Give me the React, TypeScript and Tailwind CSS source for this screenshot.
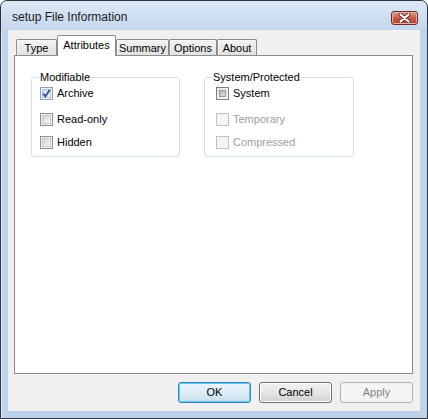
import React from 'react';

const tabs = [
  { label: 'Type', w: 'w-[41px]' },
  { label: 'Attributes', w: 'w-[59px]', active: true },
  { label: 'Summary', w: 'w-[53px]' },
  { label: 'Options', w: 'w-[48px]' },
  { label: 'About', w: 'w-[40px]' },
];

type BoxState = 'checked' | 'unchecked' | 'mixed' | 'disabled';

function CheckBox({ state }: { state: BoxState }) {
  if (state === 'disabled') {
    return <div className="w-[13px] h-[13px] shrink-0 border border-[#c2c2c2] bg-[#f4f4f4]" />;
  }
  if (state === 'mixed') {
    return (
      <div className="w-[13px] h-[13px] shrink-0 border border-[#7f7f7f] bg-gradient-to-br from-[#e4e4e4] to-[#f7f7f7] p-[2px]">
        <div className="w-full h-full border border-[#9c9c9c] bg-gradient-to-br from-[#b0b0b0] to-[#e2e2e2]" />
      </div>
    );
  }
  return (
    <div
      className={`relative w-[13px] h-[13px] shrink-0 border p-px ${
        state === 'checked' ? 'border-[#8e9fbd] bg-[#eef3fb]' : 'border-[#8e8f8f] bg-[#f4f4f4]'
      }`}
    >
      <div
        className={`w-full h-full border bg-gradient-to-br ${
          state === 'checked'
            ? 'border-[#b9c8e0] from-[#cfdcef] to-[#f4f8fd]'
            : 'border-[#c8c8c8] from-[#d4d4d4] to-[#f9f9f9]'
        }`}
      />
      {state === 'checked' && (
        <svg className="absolute left-0 top-0" width="11" height="11" viewBox="0 0 11 11">
          <path d="M2.2 5.6 L4.4 8.3 L8.9 1.8" fill="none" stroke="#3c5590" strokeWidth="1.9" />
        </svg>
      )}
    </div>
  );
}

function Row({ state, label, first, gap }: { state: BoxState; label: string; first?: boolean; gap?: string }) {
  return (
    <div className={`flex items-center h-[13px] ${first ? '' : gap}`}>
      <CheckBox state={state} />
      <span className={`ml-[4px] leading-[13px] ${state === 'disabled' ? 'text-[#9e9e9e]' : 'text-black'}`}>
        {label}
      </span>
    </div>
  );
}

function GroupBox({ title, width, padLeft, children }: { title: string; width: string; padLeft: string; children: React.ReactNode }) {
  return (
    <div className={`relative ${width} h-[80px] border border-[#d5dfe5] rounded-[3px] pt-[9px] ${padLeft}`}>
      <span className="absolute left-[7px] top-[-8px] px-px bg-white leading-[14px] text-black">{title}</span>
      {children}
    </div>
  );
}

function Button({ label, kind }: { label: string; kind?: 'default' | 'disabled' }) {
  if (kind === 'disabled') {
    return (
      <div className="w-[73px] h-[21px] rounded-[3px] border border-[#adb2b5] bg-[#f4f4f4] flex items-center justify-center text-[#838383]">
        {label}
      </div>
    );
  }
  if (kind === 'default') {
    return (
      <div className="w-[73px] h-[21px] rounded-[3px] border border-[#3c7fb1] shadow-[inset_0_0_0_1px_#5fcbf4] bg-gradient-to-b from-[#eaf5fb] via-[#dcecf6] to-[#c9e1f0] flex items-center justify-center text-black">
        {label}
      </div>
    );
  }
  return (
    <div className="w-[73px] h-[21px] rounded-[3px] border border-[#707070] shadow-[inset_0_0_0_1px_#fcfcfc] bg-gradient-to-b from-[#f2f2f2] via-[#e6e6e6] to-[#d0d0d0] flex items-center justify-center text-black">
      {label}
    </div>
  );
}

export default function App() {
  return (
    <div className="w-[428px] h-[419px] flex flex-col rounded-t-[7px] border border-[#2c333b] bg-[#bdd3eb] shadow-[inset_1px_1px_0_#e6eff9] font-['Liberation_Sans',Arial,sans-serif] text-[11px] overflow-hidden">
      {/* Title bar */}
      <div className="h-[29px] flex items-start bg-gradient-to-b from-[#dde8f5] to-[#c3d7ed] rounded-t-[6px]">
        <span className="mt-[9px] ml-[11px] text-[12px] leading-[15px] text-[#1a1a1a]">setup File Information</span>
        <div className="ml-auto mr-[9px] mt-[10px] w-[27px] h-[14px] rounded-[3px] border border-[#6b2b24] bg-gradient-to-b from-[#e4a192] via-[#c75a47] to-[#b8432f] shadow-[inset_0_0_0_1px_#eab0a2] flex items-center justify-center">
          <svg width="13" height="10" viewBox="0 0 13 10">
            <path d="M2.5 1.5 L10.5 8.5 M10.5 1.5 L2.5 8.5" stroke="#5a2a24" strokeWidth="4" strokeLinecap="round" />
            <path d="M2.5 1.5 L10.5 8.5 M10.5 1.5 L2.5 8.5" stroke="#ffffff" strokeWidth="2.2" strokeLinecap="round" />
          </svg>
        </div>
      </div>

      {/* Client area */}
      <div className="flex-1 mx-[7px] mb-[7px] bg-[#f0f0f0] flex flex-col pt-[5px] pl-[6px] pr-[7px] pb-[8px]">
        {/* Tabs */}
        <div className="h-[20px] flex items-end pl-[2px]">
          {tabs.map((t) =>
            t.active ? (
              <div
                key={t.label}
                className={`${t.w} h-[21px] -mb-px relative z-10 border border-b-0 border-[#898c95] rounded-t-[2px] bg-white flex items-start justify-center pt-[2px] leading-[14px]`}
              >
                {t.label}
              </div>
            ) : (
              <div
                key={t.label}
                className={`${t.w} h-[16px] border border-b-0 border-[#898c95] rounded-t-[2px] bg-gradient-to-b from-[#f3f3f3] to-[#e2e2e2] shadow-[inset_1px_1px_0_#fbfbfb] flex items-center justify-center leading-[14px]`}
              >
                {t.label}
              </div>
            )
          )}
        </div>

        {/* Tab page */}
        <div className="h-[319px] border border-[#898c95] bg-white pt-[21px] pl-[16px] flex items-start gap-[24px]">
          <GroupBox title="Modifiable" width="w-[149px]" padLeft="pl-[8px]">
            <Row state="checked" label="Archive" first />
            <Row state="unchecked" label="Read-only" gap="mt-[13px]" />
            <Row state="unchecked" label="Hidden" gap="mt-[10px]" />
          </GroupBox>
          <GroupBox title="System/Protected" width="w-[150px]" padLeft="pl-[11px]">
            <Row state="mixed" label="System" first />
            <Row state="disabled" label="Temporary" gap="mt-[13px]" />
            <Row state="disabled" label="Compressed" gap="mt-[10px]" />
          </GroupBox>
        </div>

        {/* Buttons */}
        <div className="mt-[8px] flex justify-end gap-[8px]">
          <Button label="OK" kind="default" />
          <Button label="Cancel" />
          <Button label="Apply" kind="disabled" />
        </div>
      </div>
    </div>
  );
}
